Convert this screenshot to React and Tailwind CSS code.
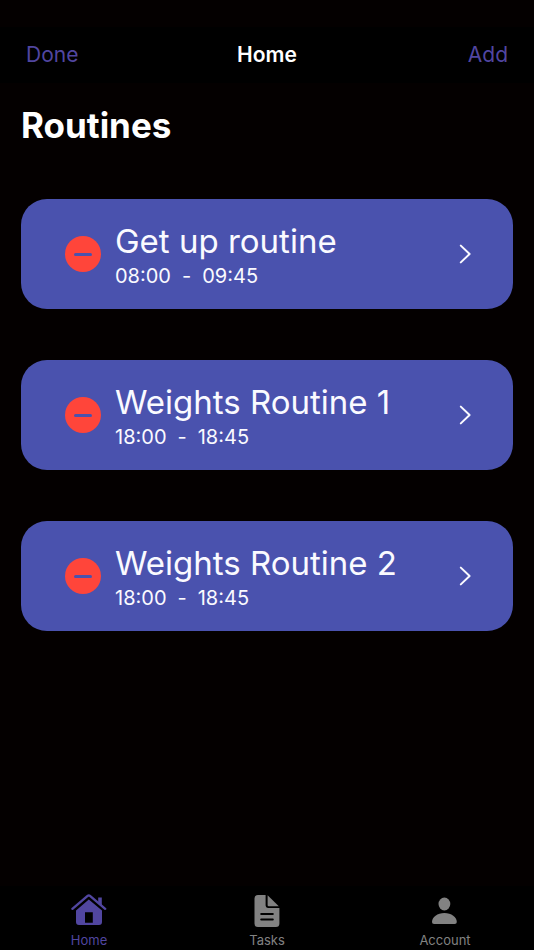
import React, { useState } from 'react';

const initialRoutines = [
  { id: 1, name: 'Get up routine', start: '08:00', end: '09:45' },
  { id: 2, name: 'Weights Routine 1', start: '18:00', end: '18:45' },
  { id: 3, name: 'Weights Routine 2', start: '18:00', end: '18:45' },
];

const HomeIcon = () => (
  <svg className="h-9 w-9" viewBox="0 0 36 36" aria-hidden="true">
    <path
      d="M1.4 16.8 L16.6 3.9 Q17.8 2.9 19 3.9 L34.2 16.8"
      fill="none"
      stroke="currentColor"
      strokeWidth="2.4"
      strokeLinecap="round"
    />
    <path d="M27.2 5.4h3.6v8.2L27.2 10.6z" fill="currentColor" />
    <path
      fillRule="evenodd"
      fill="currentColor"
      d="M17.8 7.4 L31 18.6 V30 a3 3 0 0 1 -3 3 H8 a3 3 0 0 1 -3 -3 V18.6 Z M14 20.2 V30.8 H21.8 V20.2 Z"
    />
  </svg>
);

const TasksIcon = () => (
  <svg className="h-9 w-9" viewBox="0 0 36 36" aria-hidden="true">
    <path
      fill="currentColor"
      fillRule="evenodd"
      d="M9 3 H16.6 V13.6 a2.4 2.4 0 0 0 2.4 2.4 H30.4 V31.5 a3.5 3.5 0 0 1 -3.5 3.5 H9 a3.5 3.5 0 0 1 -3.5 -3.5 V6.5 a3.5 3.5 0 0 1 3.5 -3.5 Z M12.2 21 a1 1 0 0 0 0 2 h11.6 a1 1 0 0 0 0 -2 Z M12.2 26.6 a1 1 0 0 0 0 2 h11.6 a1 1 0 0 0 0 -2 Z"
    />
    <path fill="currentColor" d="M18.6 3.2 L29.8 14.2 H19.8 a1.2 1.2 0 0 1 -1.2 -1.2 Z" />
  </svg>
);

const AccountIcon = () => (
  <svg className="h-9 w-9" viewBox="0 0 36 36" aria-hidden="true">
    <ellipse cx="17.4" cy="12" rx="5.9" ry="6.4" fill="currentColor" />
    <path
      fill="currentColor"
      d="M5 30 C5 25.3 10.4 21 17.4 21 S29.8 25.3 29.8 30 Q29.8 32 27.7 32 H7.1 Q5 32 5 30 Z"
    />
  </svg>
);

const tabs = [
  { name: 'Home', icon: HomeIcon },
  { name: 'Tasks', icon: TasksIcon },
  { name: 'Account', icon: AccountIcon },
];

const RoutineCard = ({ routine, editing, onRemove }) => (
  <li className="flex items-center rounded-[26px] bg-[#4a52ae] pl-11 pr-10 py-5 text-[#fafaff]">
    {editing && (
      <button
        type="button"
        className="mr-3.5 flex h-9 w-9 shrink-0 items-center justify-center rounded-full bg-[#ff453a]"
        onClick={() => onRemove(routine.id)}
        aria-label={`Remove ${routine.name}`}
      >
        <span className="h-[3px] w-[18px] rounded-full bg-[#4a52ae]" />
      </button>
    )}
    <a href="#routine" className="flex min-w-0 flex-1 items-center justify-between">
      <span className="flex flex-col">
        <span className="text-[33px] leading-[44px]">{routine.name}</span>
        <span className="flex gap-[11px] text-xl leading-[26px]">
          <span>{routine.start}</span>
          <span>-</span>
          <span>{routine.end}</span>
        </span>
      </span>
      <svg className="h-5 w-4 shrink-0" viewBox="0 0 16 20" aria-hidden="true">
        <path
          d="M3.8 1.6 L12.6 10 L3.8 18.4"
          fill="none"
          stroke="currentColor"
          strokeWidth="2"
          strokeLinecap="round"
          strokeLinejoin="round"
        />
      </svg>
    </a>
  </li>
);

const App = () => {
  const [routines, setRoutines] = useState(initialRoutines);
  const [editing, setEditing] = useState(true);
  const [activeTab, setActiveTab] = useState('Home');

  const handleRemove = (id) => {
    setRoutines((prev) => prev.filter((routine) => routine.id !== id));
  };

  return (
    <div className="flex min-h-screen flex-col bg-[#040000] font-['Inter',sans-serif] text-white">
      {/* Navigation bar */}
      <header className="mt-[27px] grid h-14 grid-cols-3 items-center bg-black px-[26px]">
        <button
          type="button"
          className="justify-self-start text-[21px] leading-7 text-[#5146a0]"
          onClick={() => setEditing(!editing)}
        >
          {editing ? 'Done' : 'Edit'}
        </button>
        <span className="justify-self-center text-[21px] leading-7 font-semibold">Home</span>
        <button type="button" className="justify-self-end text-[21px] leading-7 text-[#5146a0]">
          Add
        </button>
      </header>

      <main className="flex-1 px-[21px] pt-[21px]">
        <h1 className="text-[35px] leading-[42px] font-bold">Routines</h1>
        <ul className="mt-[53px] space-y-[51px]">
          {routines.map((routine) => (
            <RoutineCard
              key={routine.id}
              routine={routine}
              editing={editing}
              onRemove={handleRemove}
            />
          ))}
        </ul>
      </main>

      {/* Tab bar */}
      <nav className="grid h-16 grid-cols-3 bg-black">
        {tabs.map(({ name, icon: Icon }) => (
          <button
            key={name}
            type="button"
            className={`flex flex-col items-center pt-1.5 ${
              activeTab === name ? 'text-[#5146a0]' : 'text-[#828282]'
            }`}
            onClick={() => setActiveTab(name)}
          >
            <Icon />
            <span className="mt-1 text-[13px] leading-4">{name}</span>
          </button>
        ))}
      </nav>
    </div>
  );
};

export default App;
